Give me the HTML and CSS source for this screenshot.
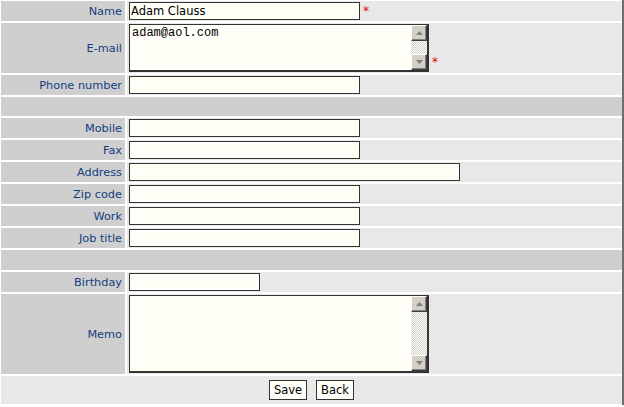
FILE: index.html
```html
<!DOCTYPE html>
<html>
<head>
<meta charset="utf-8">
<link rel="stylesheet" href="styles.css">
</head>
<body>
<form class="form">
  <div class="label">Name</div>
  <div class="field"><input class="txt w231" type="text" value="Adam Clauss"><span class="req">*</span></div>

  <div class="label">E-mail</div>
  <div class="field field-bottom">
    <div class="area area-email">
      <textarea>adam@aol.com</textarea>
      <div class="sb">
        <div class="sb-btn"><svg width="7" height="4" viewBox="0 0 7 4"><path d="M3.5 0L7 4H0z" fill="#808080"/></svg></div>
        <div class="sb-track"></div>
        <div class="sb-btn"><svg width="7" height="4" viewBox="0 0 7 4"><path d="M0 0H7L3.5 4z" fill="#808080"/></svg></div>
      </div>
    </div>
    <span class="req req-bottom">*</span>
  </div>

  <div class="label">Phone number</div>
  <div class="field"><input class="txt w231" type="text"></div>

  <div class="sep sep-short"></div>

  <div class="label">Mobile</div>
  <div class="field"><input class="txt w231" type="text"></div>
  <div class="label">Fax</div>
  <div class="field"><input class="txt w231" type="text"></div>
  <div class="label">Address</div>
  <div class="field"><input class="txt w331" type="text"></div>
  <div class="label">Zip code</div>
  <div class="field"><input class="txt w231" type="text"></div>
  <div class="label">Work</div>
  <div class="field"><input class="txt w231" type="text"></div>
  <div class="label">Job title</div>
  <div class="field"><input class="txt w231" type="text"></div>

  <div class="sep"></div>

  <div class="label">Birthday</div>
  <div class="field"><input class="txt w131" type="text"></div>

  <div class="label">Memo</div>
  <div class="field">
    <div class="area area-memo">
      <textarea></textarea>
      <div class="sb">
        <div class="sb-btn"><svg width="7" height="4" viewBox="0 0 7 4"><path d="M3.5 0L7 4H0z" fill="#808080"/></svg></div>
        <div class="sb-track"></div>
        <div class="sb-btn"><svg width="7" height="4" viewBox="0 0 7 4"><path d="M0 0H7L3.5 4z" fill="#808080"/></svg></div>
      </div>
    </div>
  </div>

  <div class="actions">
    <button type="button" class="btn">Save</button>
    <button type="button" class="btn">Back</button>
  </div>
</form>
</body>
</html>
```

FILE: styles.css
```css
html, body {
  margin: 0;
  padding: 0;
}
body {
  width: 624px;
  box-sizing: border-box;
  padding: 1px 0 1px 1px;
  border-right: 2px solid #6e6e6e;
  background: #ffffff;
  font-family: "DejaVu Sans", Verdana, sans-serif;
  font-size: 11.3px;
}
.form {
  display: grid;
  grid-template-columns: 124px 1fr;
  gap: 2px;
}
.label {
  background: #cfcfcf;
  color: #11407e;
  display: flex;
  align-items: center;
  justify-content: flex-end;
  padding-right: 3px;
  min-height: 20px;
}
.field {
  background: #e8e8e8;
  display: flex;
  align-items: center;
  padding: 1px 2px;
  min-height: 18px;
}
.field-bottom {
  align-items: flex-end;
}
.txt {
  box-sizing: border-box;
  height: 18px;
  margin: 0;
  border: 1px solid #333333;
  background: #fffff7;
  font-family: "DejaVu Sans", Verdana, sans-serif;
  font-size: 11.5px;
  color: #000;
  padding: 0 1px;
  outline: none;
}
.w231 { width: 231px; }
.w331 { width: 331px; }
.w131 { width: 131px; }
.req {
  color: #e00000;
  margin-left: 3px;
  font-size: 12px;
  align-self: center;
  line-height: 1;
}
.req-bottom {
  align-self: flex-end;
  margin-bottom: 4px;
}
.area {
  box-sizing: border-box;
  width: 300px;
  display: flex;
  border: 1px solid #333333;
  border-right-width: 2px;
  border-bottom-width: 2px;
  background: #fffff7;
}
.area-email { height: 48px; }
.area-memo { height: 78px; }
.area textarea {
  flex: 1;
  border: none;
  margin: 0;
  padding: 1px 2px;
  background: transparent;
  resize: none;
  outline: none;
  overflow: hidden;
  font-family: "Liberation Mono", "Courier New", monospace;
  font-size: 12px;
  line-height: 14px;
  color: #000;
}
.sb {
  width: 16px;
  display: flex;
  flex-direction: column;
}
.sb-btn {
  box-sizing: border-box;
  height: 16px;
  background: #d4d0c8;
  border: 1px solid;
  border-color: #ffffff #404040 #404040 #ffffff;
  box-shadow: inset -1px -1px 0 #808080;
  display: flex;
  align-items: center;
  justify-content: center;
}
.sb-track {
  flex: 1;
  background: repeating-conic-gradient(#ffffff 0 25%, #d4d0c8 0 50%) 0 0 / 2px 2px;
}
.sep {
  grid-column: 1 / -1;
  background: #cfcfcf;
  height: 20px;
}
.sep-short {
  height: 19px;
}
.actions {
  grid-column: 1 / -1;
  background: #e8e8e8;
  height: 28px;
  display: flex;
  align-items: center;
  justify-content: center;
  gap: 9px;
}
.btn {
  box-sizing: border-box;
  width: 38px;
  height: 20px;
  margin: 0;
  padding: 0;
  border: 1px solid #333333;
  background: #fffff7;
  font-family: "DejaVu Sans", Verdana, sans-serif;
  font-size: 11.5px;
  color: #000;
}
```
